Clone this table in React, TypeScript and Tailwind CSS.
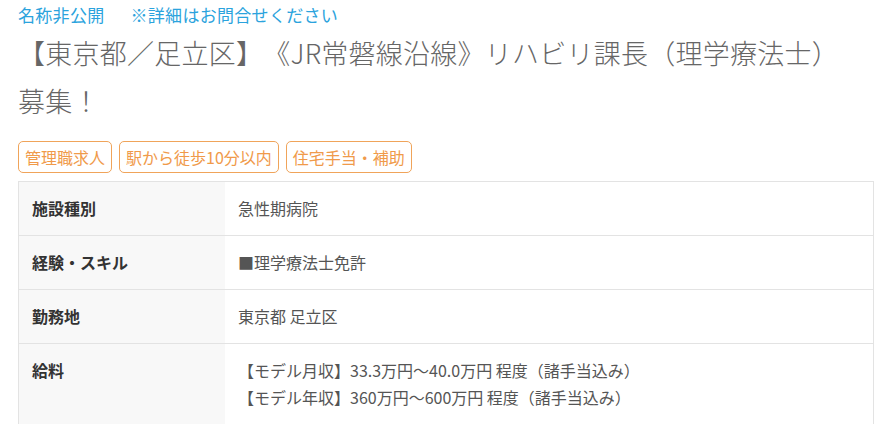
import React from "react";

const rows: { label: string; value: React.ReactNode }[] = [
  { label: "施設種別", value: "急性期病院" },
  { label: "経験・スキル", value: "■理学療法士免許" },
  { label: "勤務地", value: "東京都 足立区" },
  {
    label: "給料",
    value: (
      <>
        <div>【モデル月収】33.3万円～40.0万円 程度（諸手当込み）</div>
        <div>【モデル年収】360万円～600万円 程度（諸手当込み）</div>
        <div>&nbsp;</div>
      </>
    ),
  },
];

export default function App() {
  return (
    <div
      className="bg-white w-[887px] h-[424px] overflow-hidden pl-[18px] pr-[13px] [text-spacing-trim:space-all]"
      style={{ fontFamily: '"Noto Sans CJK JP", "Noto Sans", sans-serif' }}
    >
      <div className="pt-[3px] text-[17px] leading-[24px] text-[#2ba3dd] tracking-[0.3px]">
        名称非公開<span className="ml-[26px]">※詳細はお問合せください</span>
      </div>
      <h1 className="mt-[2px] pr-[18px] text-[27px] leading-[48px] font-light text-[#666] tracking-[0.25px] [text-spacing-trim:space-all]">
        【東京都／足立区】《JR常磐線沿線》リハビリ課長（理学療法士）募集！
      </h1>
      <div className="mt-[16px] flex gap-[7px]">
        {["管理職求人", "駅から徒歩10分以内", "住宅手当・補助"].map((t) => (
          <span
            key={t}
            className="h-[32px] px-[6px] flex items-center border border-[#f0a45a] rounded-[5px] text-[#f09a4a] text-[16px]"
          >
            {t}
          </span>
        ))}
      </div>
      <div className="mt-[8px] border border-[#e3e3e3]">
        {rows.map((r, i) => (
          <div
            key={r.label}
            className={`grid grid-cols-[206px_1fr] ${i > 0 ? "border-t border-[#e3e3e3]" : ""}`}
          >
            <div className="bg-[#f8f8f8] px-[13px] py-[13px] text-[16px] leading-[27px] font-bold text-[#333]">
              {r.label}
            </div>
            <div className="px-[13px] py-[13px] text-[16px] leading-[27px] text-[#555]">
              {r.value}
            </div>
          </div>
        ))}
      </div>
    </div>
  );
}
